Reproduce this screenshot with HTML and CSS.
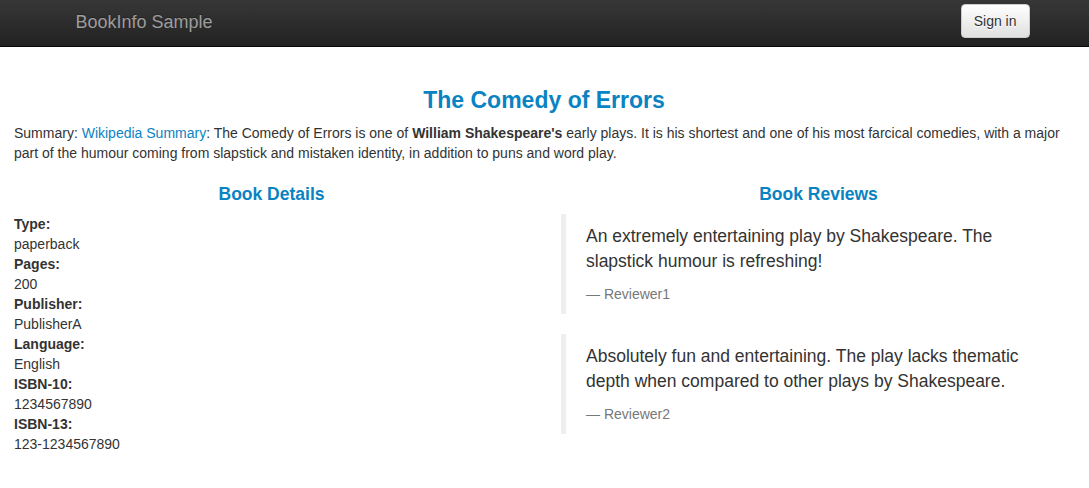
FILE: index.html
```html
<!DOCTYPE html>
<html>
<head>
<meta charset="utf-8">
<title>Simple Bookstore App</title>
<link rel="stylesheet" href="styles.css">
</head>
<body>
<nav class="navbar">
  <div class="nav-inner">
    <a class="brand" href="#">BookInfo Sample</a>
    <button type="button" class="btn">Sign in</button>
  </div>
</nav>
<main class="page">
  <section class="intro">
    <h3 class="title">The Comedy of Errors</h3>
    <p class="summary">Summary: <a href="#">Wikipedia Summary</a>: The Comedy of Errors is one of <b>William Shakespeare's</b> early plays. It is his shortest and one of his most farcical comedies, with a major part of the humour coming from slapstick and mistaken identity, in addition to puns and word play.</p>
  </section>
  <div class="cols">
    <section class="col">
      <h4 class="heading">Book Details</h4>
      <dl class="details">
        <dt>Type:</dt><dd>paperback</dd>
        <dt>Pages:</dt><dd>200</dd>
        <dt>Publisher:</dt><dd>PublisherA</dd>
        <dt>Language:</dt><dd>English</dd>
        <dt>ISBN-10:</dt><dd>1234567890</dd>
        <dt>ISBN-13:</dt><dd>123-1234567890</dd>
      </dl>
    </section>
    <section class="col">
      <h4 class="heading reviews-heading">Book Reviews</h4>
      <blockquote class="review">
        <p>An extremely entertaining play by Shakespeare. The slapstick humour is refreshing!</p>
        <footer>Reviewer1</footer>
      </blockquote>
      <blockquote class="review">
        <p>Absolutely fun and entertaining. The play lacks thematic depth when compared to other plays by Shakespeare.</p>
        <footer>Reviewer2</footer>
      </blockquote>
    </section>
  </div>
</main>
</body>
</html>
```
FILE: styles.css
```css
* { box-sizing: border-box; }
html, body { margin: 0; padding: 0; }
body {
  font-family: "Liberation Sans", Arial, sans-serif;
  font-size: 14px;
  line-height: 20px;
  color: #333;
  background: #fff;
}
.navbar {
  height: 47px;
  background: linear-gradient(to bottom, #373737 0%, #222 100%);
  border-bottom: 1px solid #080808;
}
.nav-inner {
  width: 970px;
  margin: 0 auto;
  height: 46px;
  display: flex;
  align-items: flex-start;
  justify-content: space-between;
  padding-left: 16px;
}
.brand {
  font-size: 18px;
  line-height: 20px;
  color: #9d9d9d;
  text-decoration: none;
  padding-top: 12px;
  text-shadow: 0 -1px 0 rgba(0,0,0,0.25);
}
.btn {
  margin-top: 4px;
  height: 34px;
  padding: 6px 12px;
  font-family: inherit;
  font-size: 14px;
  line-height: 20px;
  color: #333;
  background: linear-gradient(to bottom, #fff 0%, #e0e0e0 100%);
  border: 1px solid #ccc;
  border-radius: 4px;
  box-shadow: inset 0 1px 0 rgba(255,255,255,.15), 0 1px 1px rgba(0,0,0,.075);
  text-shadow: 0 1px 0 #fff;
}
.page {
  padding: 20px 15px 0 14px;
}
.title {
  margin: 20px 0 10px;
  text-align: center;
  font-size: 23px;
  line-height: 26px;
  font-weight: bold;
  color: #0a83c2;
}
.summary {
  margin: 0 0 10px;
}
.summary a { color: #0a83c2; text-decoration: none; }
.cols {
  display: grid;
  grid-template-columns: 1fr 1fr;
  column-gap: 30px;
  margin-top: 11px;
}
.heading {
  margin: 10px 0 10px;
  text-align: center;
  font-size: 17.5px;
  line-height: 20px;
  font-weight: bold;
  color: #0a83c2;
}
.reviews-heading { padding-left: 4px; }
.details { margin: 0 0 20px; }
.details dt { font-weight: bold; }
.details dd { margin: 0; }
.review {
  margin: 0 0 20px 2px;
  padding: 10px 20px;
  border-left: 5px solid #eee;
  font-size: 17.5px;
  line-height: 25px;
}
.review p { margin: 0 0 10px; }
.review footer {
  font-size: 14px;
  line-height: 20px;
  color: #777;
}
.review footer::before { content: "\2014 \00A0"; }
```
